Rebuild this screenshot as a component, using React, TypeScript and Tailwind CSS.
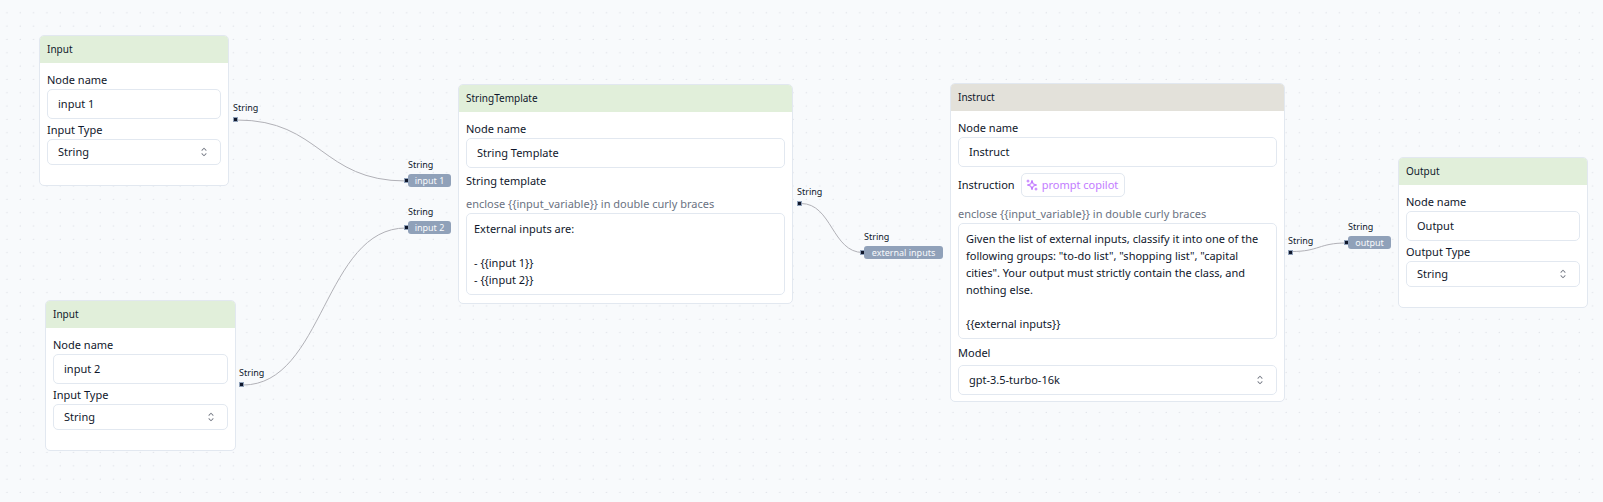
import { useId, type ReactNode } from "react";
import { RxCaretSort } from "react-icons/rx";

const fieldBox =
  "block w-full rounded-[5px] border border-slate-200 bg-white text-[11px] text-slate-900 outline-none focus:border-slate-400";

function NodeCard({
  title,
  place,
  header = "bg-[#e1efda]",
  children,
}: {
  title: string;
  place: string;
  header?: string;
  children: ReactNode;
}) {
  return (
    <section
      className={`absolute overflow-hidden rounded-[5px] border border-slate-200 bg-white ${place}`}
    >
      <h2 className={`px-[7px] py-1.5 text-[10px] leading-[15px] text-slate-900 ${header}`}>
        {title}
      </h2>
      <div className="px-[7px] pt-2">{children}</div>
    </section>
  );
}

function FieldLabel({ htmlFor, children }: { htmlFor: string; children: ReactNode }) {
  return (
    <label htmlFor={htmlFor} className="block text-[11px] leading-[18px] text-slate-900">
      {children}
    </label>
  );
}

function TextField({ label, value }: { label: string; value: string }) {
  const id = useId();
  return (
    <div>
      <FieldLabel htmlFor={id}>{label}</FieldLabel>
      <input id={id} type="text" defaultValue={value} className={`h-[30px] px-2.5 pb-0.5 ${fieldBox}`} />
    </div>
  );
}

function SelectBox({ id, value, height }: { id: string; value: string; height: string }) {
  return (
    <div className="relative">
      <select id={id} defaultValue={value} className={`appearance-none px-2.5 ${height} ${fieldBox}`}>
        <option>{value}</option>
      </select>
      <RxCaretSort
        aria-hidden="true"
        className="pointer-events-none absolute inset-y-0 right-2.5 my-auto size-[14px] text-slate-900 opacity-60"
      />
    </div>
  );
}

function TypeField({ label }: { label: string }) {
  const id = useId();
  return (
    <div className="pt-0.5 pb-5">
      <FieldLabel htmlFor={id}>{label}</FieldLabel>
      <SelectBox id={id} value="String" height="h-[26px]" />
    </div>
  );
}

function TemplateArea({ id, value, rows }: { id: string; value: string; rows: number }) {
  return (
    <>
      <p className="text-[11px] leading-[18px] text-gray-500">
        {"enclose {{input_variable}} in double curly braces"}
      </p>
      <textarea
        id={id}
        rows={rows}
        defaultValue={value}
        className={`resize-none overflow-hidden px-[7px] py-1.5 leading-[17px] ${fieldBox}`}
      />
    </>
  );
}

function OutHandle({ place }: { place: string }) {
  return (
    <div className={`absolute text-[9px] leading-[14px] text-slate-900 ${place}`}>
      String
      <span className="mt-[3px] ml-px block size-[3px] bg-slate-900 outline outline-slate-400" />
    </div>
  );
}

function InHandle({ name, place }: { name: string; place: string }) {
  return (
    <div className={`absolute text-[9px] text-slate-900 ${place}`}>
      <div className="leading-[14px]">String</div>
      <div className="relative mt-0.5 rounded-[3px] bg-slate-400 text-center leading-[13px] whitespace-nowrap text-slate-50">
        {name}
        <span className="absolute top-[5px] -left-[3px] size-[3px] bg-slate-900 outline outline-slate-400" />
      </div>
    </div>
  );
}

function Sparkles() {
  return (
    <svg
      aria-hidden="true"
      viewBox="0 0 24 24"
      className="size-3"
      fill="none"
      stroke="currentColor"
      strokeWidth="2.4"
      strokeLinecap="round"
      strokeLinejoin="round"
    >
      <path d="m12 3-1.912 5.813a2 2 0 0 1-1.275 1.275L3 12l5.813 1.912a2 2 0 0 1 1.275 1.275L12 21l1.912-5.813a2 2 0 0 1 1.275-1.275L21 12l-5.813-1.912a2 2 0 0 1-1.275-1.275L12 3Z" />
      <path d="M4 2v4M20 18v4M2 4h4M18 20h4" />
    </svg>
  );
}

function Backdrop() {
  return (
    <svg aria-hidden="true" className="absolute inset-0 size-full">
      <defs>
        <pattern id="dots" width="13.325" height="13.325" patternUnits="userSpaceOnUse">
          <circle cx="6.8" cy="12.7" r="0.45" fill="#b0b6c0" />
        </pattern>
      </defs>
      <rect width="100%" height="100%" fill="url(#dots)" />
      <g fill="none" stroke="#b1b1b7" strokeWidth="1">
        <path d="M237 120C321 120 321 181 406 181" />
        <path d="M243 385C324 385 324 228 406 228" />
        <path d="M801 203.500C832 203.500 832 252.500 863 252.500" />
        <path d="M1292 251.500C1319 251.500 1319 243 1346 243" />
      </g>
    </svg>
  );
}

export default function App() {
  const templateId = useId();
  const instructionId = useId();
  const modelId = useId();

  return (
    <main className="relative min-h-screen overflow-hidden bg-slate-50 font-['Noto_Sans',sans-serif]">
      <Backdrop />

      <NodeCard title="Input" place="top-[35px] left-[39px] w-[190px]">
        <TextField label="Node name" value="input 1" />
        <TypeField label="Input Type" />
      </NodeCard>
      <OutHandle place="top-[101px] left-[233px]" />

      <NodeCard title="Input" place="top-[300px] left-[45px] w-[191px]">
        <TextField label="Node name" value="input 2" />
        <TypeField label="Input Type" />
      </NodeCard>
      <OutHandle place="top-[366px] left-[239px]" />

      <InHandle name="input 1" place="top-[158px] left-[408px] w-[43px]" />
      <InHandle name="input 2" place="top-[205px] left-[408px] w-[43px]" />
      <NodeCard title="StringTemplate" place="top-[84px] left-[458px] w-[335px]">
        <TextField label="Node name" value="String Template" />
        <div className="pt-1 pb-2">
          <div className="pb-[5px]">
            <FieldLabel htmlFor={templateId}>String template</FieldLabel>
          </div>
          <TemplateArea
            id={templateId}
            rows={4}
            value={"External inputs are:\n\n- {{input 1}}\n- {{input 2}}"}
          />
        </div>
      </NodeCard>
      <OutHandle place="top-[185px] left-[797px]" />

      <InHandle name="external inputs" place="top-[230px] left-[864px] w-[79px]" />
      <NodeCard
        title="Instruct"
        header="bg-[#e3e1da]"
        place="top-[83px] left-[950px] w-[335px]"
      >
        <TextField label="Node name" value="Instruct" />
        <div className="pt-1.5">
          <div className="flex items-center gap-1.5 pb-2">
            <FieldLabel htmlFor={instructionId}>Instruction</FieldLabel>
            <button
              type="button"
              className="flex h-6 items-center gap-1 rounded-[5px] border border-slate-200 bg-white px-1 pr-1.5 text-[11px] text-purple-400"
            >
              <Sparkles />
              prompt copilot
            </button>
          </div>
          <TemplateArea
            id={instructionId}
            rows={6}
            value={
              'Given the list of external inputs, classify it into one of the following groups: "to-do list", "shopping list", "capital cities". Your output must strictly contain the class, and nothing else.\n\n{{external inputs}}'
            }
          />
        </div>
        <div className="pt-[5px] pb-1.5">
          <div className="pb-[3px]">
            <FieldLabel htmlFor={modelId}>Model</FieldLabel>
          </div>
          <SelectBox id={modelId} value="gpt-3.5-turbo-16k" height="h-[30px]" />
        </div>
      </NodeCard>
      <OutHandle place="top-[234px] left-[1288px]" />

      <InHandle name="output" place="top-[220px] left-[1348px] w-[43px]" />
      <NodeCard title="Output" place="top-[157px] left-[1398px] w-[190px]">
        <TextField label="Node name" value="Output" />
        <TypeField label="Output Type" />
      </NodeCard>
    </main>
  );
}
